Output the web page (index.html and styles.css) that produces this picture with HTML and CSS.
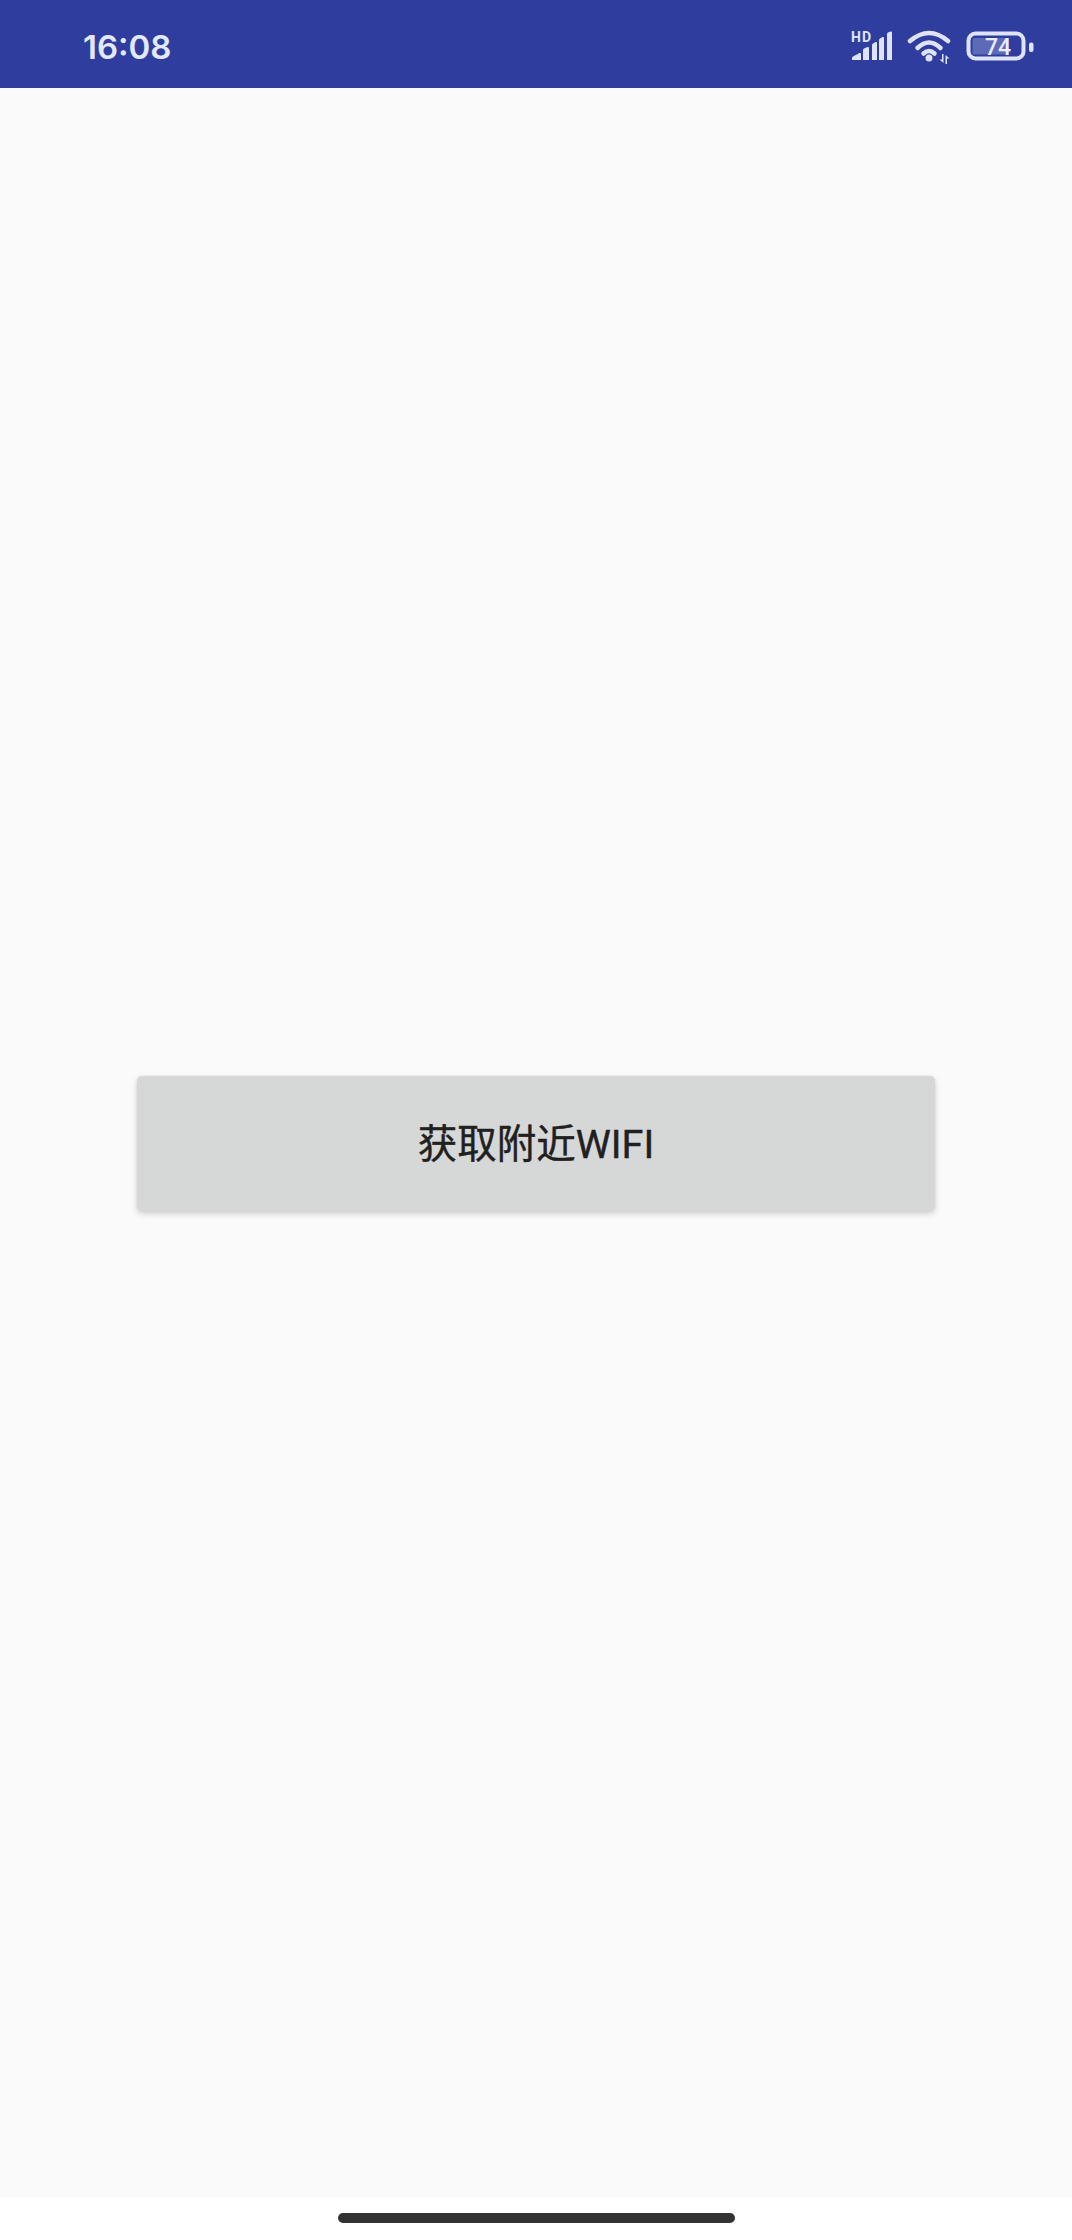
FILE: index.html
```html
<!DOCTYPE html>
<html lang="zh">
<head>
<meta charset="utf-8">
<title>WIFI</title>
<link rel="stylesheet" href="styles.css">
</head>
<body>
<div class="phone">
  <header class="status-bar">
    <span class="time">16:08</span>
    <div class="status-icons">
      <svg class="icon-signal" width="42" height="36" viewBox="-1 -2 42 36">
        <text x="0" y="10.500" class="hd">HD</text>
        <path d="M1 29 V27 Q1 26 2 25.500 L8.500 22 Q10 21.500 10 23 V29 Z" fill="#dfe3f8"/>
        <path d="M12 29 V19 Q12 18 13 17.500 L16.500 16 Q18 15.500 18 17 V29 Z" fill="#dfe3f8"/>
        <path d="M21 29 V14 Q21 13 22 12.500 L24.500 11 Q26 10.500 26 12 V29 Z" fill="#dfe3f8"/>
        <path d="M28 29 V9 Q28 8 29 7.500 L31.500 6 Q33 5.500 33 7 V29 Z" fill="#dfe3f8"/>
        <path d="M36 29 V3 Q36 2 37 1.500 L39.500 0.500 Q41 0 41 1.500 V29 Z" fill="#dfe3f8"/>
      </svg>
      <svg class="icon-wifi" width="44" height="36" viewBox="0 -2 44 36">
        <g fill="none" stroke="#dfe3f8" stroke-width="4.500" stroke-linecap="round">
          <path d="M3 10 Q22 -6 41 10"/>
          <path d="M10.500 17 Q22 6 33.500 17"/>
          <path d="M16.500 22.500 Q22 17.500 27.500 22.500"/>
        </g>
        <circle cx="22" cy="27" r="3.500" fill="#dfe3f8"/>
        <path d="M36.500 23 V32 L32.500 28.500 H35 V23 Z M38.500 33 V24 L42.500 27.500 H40 V33 Z" fill="#dfe3f8"/>
      </svg>
      <svg class="icon-battery" width="68" height="36" viewBox="0 -2 68 36">
        <rect x="2.500" y="2.500" width="55" height="25" rx="7" fill="none" stroke="#dfe3f8" stroke-width="4"/>
        <path d="M8 7 H43 V23.500 H8 Q6.500 23.500 6.500 22 V8.500 Q6.500 7 8 7 Z" fill="#5d6ab8"/>
        <rect x="63" y="11.500" width="4.500" height="9.500" rx="2" fill="#dfe3f8"/>
        <text x="32" y="24" class="level">74</text>
      </svg>
    </div>
  </header>
  <main class="content">
    <button class="wifi-button" type="button">获取附近WIFI</button>
  </main>
  <footer class="nav-bar">
    <div class="home-indicator"></div>
  </footer>
</div>
</body>
</html>
```

FILE: styles.css
```css
* {
  box-sizing: border-box;
}

html,
body {
  margin: 0;
  padding: 0;
}

body {
  background: #fafafa;
  font-family: "Noto Sans CJK SC", "Noto Sans", sans-serif;
}

.phone {
  width: 1072px;
  height: 2240px;
  display: flex;
  flex-direction: column;
  overflow: hidden;
}

.status-bar {
  height: 88px;
  flex: none;
  background: #2f3e9e;
  display: flex;
  align-items: center;
  justify-content: space-between;
  padding: 6px 38px 0 83px;
}

.time {
  color: #e4e8fb;
  font-family: Inter, Roboto, sans-serif;
  font-size: 33px;
  font-weight: 600;
  line-height: 1;
}

.status-icons {
  display: flex;
  align-items: center;
  gap: 15px;
}

.status-icons svg {
  display: block;
}

.hd {
  fill: #dfe3f8;
  font-family: Roboto, "Liberation Sans", sans-serif;
  font-size: 14px;
  font-weight: 700;
  letter-spacing: 1px;
}

.level {
  fill: #e9ecfb;
  font-family: Roboto, "Liberation Sans", sans-serif;
  font-size: 23px;
  font-weight: 500;
  text-anchor: middle;
}

.content {
  flex: 1;
  display: flex;
  align-items: center;
  justify-content: center;
  padding-top: 2px;
  background: #fafafa;
}

.wifi-button {
  width: 798px;
  height: 135px;
  border: 0;
  border-radius: 5px;
  background: #d6d7d7;
  color: #1f2020;
  font-family: Roboto, "Noto Sans CJK SC", sans-serif;
  font-size: 39.5px;
  font-weight: 400;
  -webkit-text-stroke: 0.4px #1f2020;
  box-shadow: 0 3px 6px rgba(0, 0, 0, 0.16), 0 0 3px rgba(0, 0, 0, 0.07);
  padding: 0 0 6px;
}

.nav-bar {
  height: 43px;
  flex: none;
  background: #fff;
  display: flex;
  justify-content: center;
  padding-top: 16px;
}

.home-indicator {
  width: 397px;
  height: 10px;
  border-radius: 5px;
  background: #333;
}
```
